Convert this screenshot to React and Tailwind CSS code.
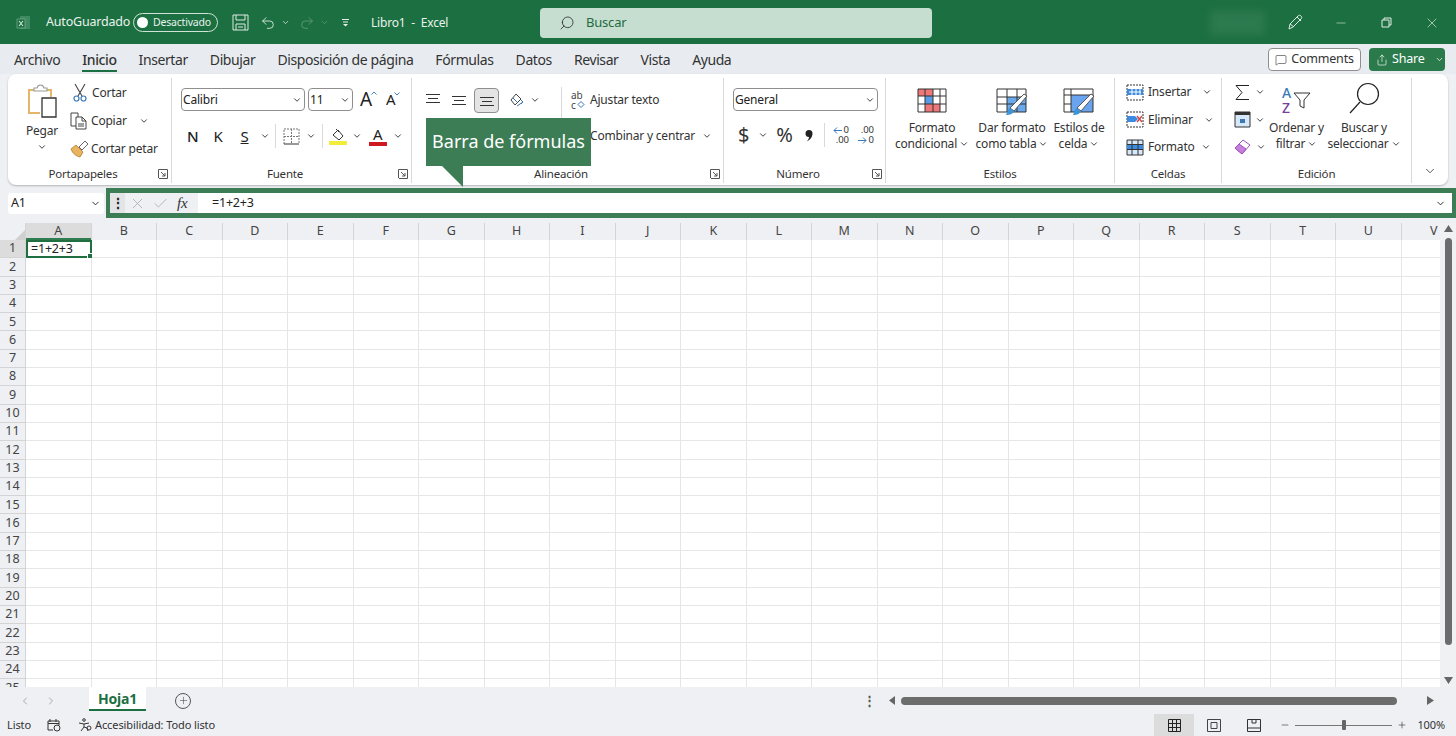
import { ChevronDown, ChevronLeft, ChevronRight, Undo2, Redo2, Search, X, Check, Minus, Plus, MessageSquare, Share } from 'lucide-react'

const tabs = ['Archivo', 'Inicio', 'Insertar', 'Dibujar', 'Disposición de página', 'Fórmulas', 'Datos', 'Revisar', 'Vista', 'Ayuda']
const columns = 'ABCDEFGHIJKLMNOPQRSTUV'.split('')
const rows = Array.from({ length: 25 }, (_, i) => i + 1)

const Chev = ({ className = '' }) => <ChevronDown size={10} strokeWidth={2.4} className={`text-[#444] shrink-0 ${className}`} />

const Launcher = () => (
  <svg width="10" height="10" viewBox="0 0 10 10" fill="none" stroke="#555" strokeWidth="1" className="shrink-0">
    <path d="M.5 9V.5H9.5V9.5H1" />
    <path d="M3 3l4 4M7 4v3H4" />
  </svg>
)

const PasteIcon = () => (
  <svg width="34" height="36" viewBox="0 0 34 36" fill="none">
    <path d="M15 30H4V7h22v7" stroke="#e5b66a" strokeWidth="2" />
    <path d="M9 8V5h3c1-4 6-4 7 0h3v3z" fill="#fff" stroke="#9a9a9a" strokeWidth="1.1" />
    <path d="M17 15h14v19H17z" fill="#fff" stroke="#333" strokeWidth="1.3" />
  </svg>
)

const ScissorsIcon = () => (
  <svg width="14" height="19" viewBox="0 0 14 19" fill="none">
    <path d="M2 1l7 12M12 1L5 13" stroke="#444" strokeWidth="1.1" />
    <circle cx="3.500" cy="15.500" r="2.500" stroke="#3b78b8" strokeWidth="1.2" />
    <circle cx="10.500" cy="15.500" r="2.500" stroke="#3b78b8" strokeWidth="1.2" />
  </svg>
)

const CopyIcon = () => (
  <svg width="18" height="18" viewBox="0 0 18 18" fill="none" stroke="#444" strokeWidth="1">
    <path d="M1 1h7v13H1z" />
    <path d="M6 5h6l4 4v8H6z" fill="#fff" />
    <path d="M12 5v4h4M8 12h6M8 14h6" />
  </svg>
)

const BrushIcon = () => (
  <svg width="19" height="18" viewBox="0 0 19 18" fill="none">
    <path d="M1 9l5-4 7 7-3 5c-4-1-7-3-9-8z" fill="#eab35f" stroke="#a8782f" strokeWidth=".8" />
    <path d="M9 7l6-6 3 3-6 6z" fill="#fff" stroke="#555" strokeWidth=".9" />
  </svg>
)

const Lines = ({ y }) => (
  <svg width="16" height="14" viewBox="0 0 16 14" stroke="#333" strokeWidth="1.1">
    <path d={y} />
  </svg>
)

const CondFormatIcon = () => (
  <svg width="30" height="25" viewBox="0 0 30 25" fill="none">
    <path d="M1 1h15v7H1zM8 16h15v8H8z" fill="#ee7777" />
    <path d="M8 8h8v8H8z" fill="#5a9be6" />
    <path d="M1 1h28v23H1zM1 8h28M1 16h28M8 1v23M16 1v23M23 1v23" stroke="#333" strokeWidth="1" />
  </svg>
)

const TableFormatIcon = () => (
  <svg width="32" height="28" viewBox="0 0 32 28" fill="none">
    <path d="M11 9h19v15H11z" fill="#6aa9ec" />
    <path d="M1 1h29v23H1zM1 9h29M1 16h29M11 1v23M21 1v23" stroke="#333" strokeWidth="1" />
    <path d="M14 20L28 6l3 2-13 15z" fill="#fff" stroke="#555" />
    <path d="M10 27l3-7 5 3c-1 3-4 4-8 4z" fill="#3c95d8" />
  </svg>
)

const CellStyleIcon = () => (
  <svg width="32" height="28" viewBox="0 0 32 28" fill="none">
    <path d="M8 7h22v17H8z" fill="#6aa3ee" />
    <path d="M1 1h29v23H1zM1 7h29M8 1v23M1 16h7" stroke="#333" strokeWidth="1" />
    <path d="M14 20L28 6l3 2-13 15z" fill="#fff" stroke="#555" />
    <path d="M10 27l3-7 5 3c-1 3-4 4-8 4z" fill="#3c95d8" />
  </svg>
)

const CellIcon = ({ kind }) => (
  <svg width="18" height="17" viewBox="0 0 18 17" fill="none">
    <path d="M1 1h16v15H1z" fill={kind === 'format' ? '#d7e8f8' : '#fff'} stroke="#333" strokeDasharray={kind === 'format' ? undefined : '2 1'} />
    <path d={kind === 'delete' ? 'M1 5h8l3 3-3 3H1z' : 'M1 5h16v6H1z'} fill="#3d8be0" />
    {kind === 'delete' && <path d="M11 5l5 6M16 5l-5 6" stroke="#d04545" strokeWidth="1.4" />}
    {kind === 'format' && <path d="M1 5.500h16M1 10.500h16M6 1v15M12 1v15" stroke="#333" />}
    {kind === 'insert' && <path d="M3 8h12M6 5v6M10 5v6M14 5v6" stroke="#fff" />}
  </svg>
)

const Group = ({ label, launcher, className, children }) => (
  <div className={`flex flex-col h-full shrink-0 border-r border-[#d9d9d9] ${className}`}>
    <div className="flex-1 min-h-0">{children}</div>
    <div className="h-[18px] flex items-center text-[11.500px] text-[#333]">
      <span className="flex-1 text-center">{label}</span>
      {launcher && <Launcher />}
    </div>
  </div>
)

const LargeButton = ({ icon, lines, className = '' }) => (
  <div className={`flex flex-col items-center shrink-0 ${className}`}>
    <div className="h-[40px] w-full flex items-start justify-center pt-[8px]">{icon}</div>
    <div className="text-[12px] leading-[16px] text-center text-[#333] whitespace-nowrap">
      <div>{lines[0]}</div>
      <div className="flex items-center justify-center gap-[2px]">{lines[1]}<Chev /></div>
    </div>
  </div>
)

const Select = ({ value, className }) => (
  <div className={`h-[23px] bg-white border border-[#8f8f8f] rounded-[4px] flex items-center justify-between pl-[1px] pr-[2px] text-[12px] text-[#222] ${className}`}>
    <span>{value}</span>
    <Chev />
  </div>
)

export default function App() {
  return (
    <div className="w-[1456px] h-[736px] relative overflow-hidden flex flex-col bg-[#eef0f3] text-[#222] tracking-[-0.2px] font-['Noto_Sans','Open_Sans',sans-serif]">
      {/* title bar */}
      <div className="h-[44px] shrink-0 bg-[#1c6f41] flex items-center text-white text-[12.500px] pt-[1px]">
        <svg width="16" height="16" viewBox="0 0 16 16" className="ml-[15px]">
          <path d="M5 1h10v13H5z" fill="#3f8a60" />
          <path d="M2 4h8v9H2z" fill="#1c6f41" stroke="#8fbda3" strokeWidth=".6" />
          <path d="M4 6l4 5M8 6l-4 5" stroke="#d6e6dc" strokeWidth="1.1" />
        </svg>
        <span className="ml-[15px] w-[81px] whitespace-nowrap text-[#e9f2ec]">AutoGuardado</span>
        <div className="ml-[6px] w-[85px] h-[19px] rounded-full border border-[#cfe3d6] flex items-center pl-[3px] gap-[5px]">
          <span className="w-[11px] h-[11px] rounded-full bg-white" />
          <span className="text-[10.500px] text-[#e9f2ec]">Desactivado</span>
        </div>
        <svg width="17" height="17" viewBox="0 0 17 17" fill="none" stroke="#dcebe2" className="ml-[14px]">
          <path d="M1 1h15v15H1zM4 1v5h9V1M4 16v-6h9v6M6 13h5" />
        </svg>
        <Undo2 size={16} strokeWidth={1.3} className="ml-[11px] text-[#e3efe8]" />
        <ChevronDown size={9} strokeWidth={2} className="ml-[5px] text-[#e3efe8]" />
        <Redo2 size={16} strokeWidth={1.3} className="ml-[9px] text-[#5f9c7a]" />
        <ChevronDown size={9} strokeWidth={2} className="ml-[5px] text-[#5f9c7a]" />
        <svg width="9" height="9" viewBox="0 0 9 9" stroke="#e3efe8" className="ml-[12px]">
          <path d="M1 1.500h7M2 4h5" />
          <path d="M2 6h5L4.500 8.500z" fill="#e3efe8" stroke="none" />
        </svg>
        <span className="ml-[21px] w-[80px] text-[#e9f2ec] text-[12px] whitespace-pre">Libro1  -  Excel</span>
        <div className="ml-[89px] w-[392px] h-[30px] rounded-[4px] bg-[#c5decf] flex items-center pl-[19px] text-[#1f6b41]">
          <Search size={16} strokeWidth={1.3} className="text-[#333] -scale-x-100" />
          <span className="ml-[11px] text-[13px]">Buscar</span>
        </div>
        <div className="ml-[278px] w-[55px] h-[24px] bg-[#2c7a4f] blur-[4px]" />
        <svg width="17" height="17" viewBox="0 0 17 17" fill="none" stroke="#dcebe2" className="ml-[22px]">
          <path d="M2 15l1-5 8-8c1-1 2-1 3 0s1 2 0 3l-8 8z" />
          <path d="M10 3l4 4M3 10l4 3" />
        </svg>
        <Minus size={14} strokeWidth={1} className="ml-[30px] text-[#e3efe8]" />
        <svg width="11" height="11" viewBox="0 0 11 11" fill="none" stroke="#e3efe8" className="ml-[33px]">
          <path d="M1 3h7v7H1zM3 3V1h7v7H8" />
        </svg>
        <X size={16} strokeWidth={1} className="ml-[32px] text-[#e3efe8]" />
      </div>

      {/* tabs */}
      <div className="h-[30px] shrink-0 bg-[#e8ecf0] flex items-center text-[14px] text-[#333] pl-[14px] tracking-[-0.4px] pt-[1px]">
        <div className="flex items-center gap-[22px] flex-1">
          {tabs.map((tab) => (
            <span key={tab} className={`relative whitespace-nowrap ${tab === 'Inicio' ? 'font-medium' : ''}`}>
              {tab}
              {tab === 'Inicio' && <span className="absolute left-0 right-0 -bottom-[2px] h-[2px] bg-[#1c6f41]" />}
            </span>
          ))}
        </div>
        <div className="w-[93px] h-[23px] bg-white border border-[#8f8f8f] rounded-[4px] flex items-center justify-center gap-[4px] text-[12.500px] tracking-[-0.2px]">
          <MessageSquare size={12} strokeWidth={1.2} />
          Comments
        </div>
        <div className="ml-[8px] mr-[11px] w-[76px] h-[23px] bg-[#2a7a4b] rounded-[4px] flex items-center pl-[7px] gap-[4px] text-[12.500px] text-white tracking-[-0.2px]">
          <Share size={12} strokeWidth={1.3} />
          Share
          <ChevronDown size={9} strokeWidth={2} className="ml-[6px]" />
        </div>
      </div>

      {/* ribbon */}
      <div className="h-[111px] shrink-0 mx-[8px] bg-white rounded-[8px] shadow-[0_1px_2px_rgba(0,0,0,0.25)] flex pt-[4px] pb-[2px]">
        <Group label="Portapapeles" launcher className="w-[164px] pr-[3px]">
          <div className="flex pl-[17px]">
            <div className="flex flex-col items-center w-[34px] pt-[5px]">
              <PasteIcon />
              <span className="text-[12px] mt-[3px] text-[#333]">Pegar</span>
              <Chev className="mt-[2px]" />
            </div>
            <div className="ml-[11px] pt-[5px] flex flex-col gap-[9px] text-[12px] text-[#333]">
              <div className="h-[19px] flex items-center gap-[5px] pl-[3px]"><ScissorsIcon />Cortar</div>
              <div className="h-[19px] flex items-center gap-[3px]"><CopyIcon />Copiar<Chev className="ml-[9px]" /></div>
              <div className="h-[19px] flex items-center gap-[2px] whitespace-nowrap"><BrushIcon />Cortar petar</div>
            </div>
          </div>
        </Group>

        <Group label="Fuente" launcher className="w-[240px] pr-[3px]">
          <div className="pl-[9px] pt-[10px]">
            <div className="flex items-center gap-[3px]">
              <Select value="Calibri" className="w-[124px]" />
              <Select value="11" className="w-[45px]" />
              <span className="ml-[4px] text-[19px] leading-none relative">
                A
                <svg width="6" height="4" viewBox="0 0 6 4" fill="none" stroke="#4080c0" className="absolute top-[1px] -right-[5px]"><path d="M.5 3.500L3 1l2.500 2.500" /></svg>
              </span>
              <span className="ml-[11px] text-[15px] leading-none relative">
                A
                <svg width="6" height="4" viewBox="0 0 6 4" fill="none" stroke="#4080c0" className="absolute top-[0px] -right-[5px]"><path d="M.5.500L3 3 5.500.500" /></svg>
              </span>
            </div>
            <div className="flex items-center mt-[13px] text-[#222] h-[24px]">
              <span className="ml-[6px] text-[15px] font-medium">N</span>
              <span className="ml-[15px] text-[15px]">K</span>
              <span className="ml-[18px] text-[15px] underline">S</span>
              <Chev className="ml-[11px]" />
              <span className="ml-[5px] w-px h-[24px] bg-[#d9d9d9]" />
              <svg width="17" height="17" viewBox="0 0 17 17" fill="none" stroke="#777" className="ml-[7px]"><path strokeDasharray="2 1" d="M1 16V1h15v15M8.500 1v15M1 8.500h15" /><path d="M1 16h15" stroke="#333" /></svg>
              <Chev className="ml-[6px]" />
              <span className="ml-[6px] w-px h-[24px] bg-[#d9d9d9]" />
              <div className="ml-[6px] flex flex-col items-center w-[18px]">
                <svg width="15" height="13" viewBox="0 0 15 13" fill="none" stroke="#333"><path d="M3 7l5-5 5 6-4 4z" /><path d="M6 1l3 3" /></svg>
                <span className="w-[18px] h-[4px] bg-[#f3ec3a]" />
              </div>
              <Chev className="ml-[5px]" />
              <div className="ml-[7px] flex flex-col items-center w-[18px] text-[15px] leading-[15px]">
                A
                <span className="w-[18px] h-[4px] bg-[#d01820]" />
              </div>
              <Chev className="ml-[6px]" />
            </div>
          </div>
        </Group>

        <Group label="Alineación" launcher className="w-[312px] pr-[3px]">
          <div className="flex pl-[13px] pt-[9px]">
            <div className="flex items-center gap-[10px] h-[26px]">
              <Lines y="M1 1.500h14M3 5.500h10M1 9.500h14" />
              <Lines y="M1 3.500h14M3 7.500h10M1 11.500h14" />
              <div className="w-[25px] h-[25px] -ml-[3px] bg-[#e4e4e4] border border-[#8f8f8f] rounded-[4px] flex items-center justify-center">
                <Lines y="M1 4.500h14M3 8.500h10M1 12.500h14" />
              </div>
              <div className="flex items-center gap-[4px]">
                <svg width="17" height="17" viewBox="0 0 17 17" fill="none" stroke="#444"><path d="M2 8l5-6 5 5-6 6z" /><path d="M4 6l4 4M8 14l6-4M12 8l2 2-2 2" stroke="#3b78b8" /></svg>
                <Chev />
              </div>
            </div>
            <span className="ml-[21px] w-px h-[34px] bg-[#d9d9d9]" />
            <div className="ml-[9px] flex flex-col text-[12px] text-[#333]">
              <div className="h-[26px] flex items-center gap-[3px] whitespace-nowrap">
                <div className="w-[16px] text-[10px] leading-[10px] text-[#444]">
                  <div>ab</div>
                  <div className="flex items-center">
                    c
                    <svg width="8" height="8" viewBox="0 0 8 8" fill="none" stroke="#3b78b8" className="ml-[1px]"><path d="M4 .500l3 3-3 3-3-3z" /></svg>
                  </div>
                </div>
                Ajustar texto
              </div>
              <div className="h-[26px] mt-[10px] flex items-center whitespace-nowrap pl-[19px]">Combinar y centrar<Chev className="ml-[7px]" /></div>
            </div>
          </div>
        </Group>

        <Group label="Número" launcher className="w-[162px] pr-[3px]">
          <div className="pl-[9px] pt-[10px]">
            <Select value="General" className="w-[145px]" />
            <div className="flex items-center mt-[12px] h-[24px] text-[#333]">
              <span className="ml-[5px] text-[20px] leading-none">$</span>
              <Chev className="ml-[9px]" />
              <span className="ml-[8px] text-[20px] leading-none">%</span>
              <svg width="8" height="13" viewBox="0 0 8 13" className="ml-[12px]"><path d="M4 1a3.500 3.500 0 0 1 3.500 3.500C7.500 8 5 11 2 12.500 3.500 10.500 4 9 4 8a3.500 3.500 0 0 1 0-7z" fill="#222" /></svg>
              <span className="ml-[11px] w-px h-[24px] bg-[#d9d9d9]" />
              <div className="ml-[6px] w-[18px] text-[9.500px] leading-[10px] flex flex-col items-end">
                <div className="flex items-center">
                  <svg width="9" height="7" viewBox="0 0 9 7" fill="none" stroke="#3b78b8"><path d="M9 3.500H1M4 .500l-3 3 3 3" /></svg>
                  <span className="ml-[1px]">0</span>
                </div>
                <span>.00</span>
              </div>
              <div className="ml-[7px] w-[18px] text-[9.500px] leading-[10px] flex flex-col items-end">
                <span>.00</span>
                <div className="flex items-center">
                  <svg width="9" height="7" viewBox="0 0 9 7" fill="none" stroke="#3b78b8"><path d="M0 3.500h8M5 .500l3 3-3 3" /></svg>
                  <span className="ml-[1px]">0</span>
                </div>
              </div>
            </div>
          </div>
        </Group>

        <Group label="Estilos" className="w-[229px]">
          <div className="flex pt-[2px]">
            <LargeButton icon={<CondFormatIcon />} lines={['Formato', 'condicional']} className="w-[92px]" />
            <LargeButton icon={<TableFormatIcon />} lines={['Dar formato', 'como tabla']} className="w-[68px]" />
            <LargeButton icon={<CellStyleIcon />} lines={['Estilos de', 'celda']} className="w-[52px] ml-[7px]" />
          </div>
        </Group>

        <Group label="Celdas" className="w-[107px]">
          <div className="flex flex-col pl-[11px] pt-[5px] gap-[9.500px] text-[12px] text-[#333]">
            <div className="h-[18px] flex items-center gap-[4px]"><CellIcon kind="insert" />Insertar<Chev className="ml-[7px]" /></div>
            <div className="h-[18px] flex items-center gap-[4px]"><CellIcon kind="delete" />Eliminar<Chev className="ml-[7px]" /></div>
            <div className="h-[18px] flex items-center gap-[4px]"><CellIcon kind="format" />Formato<Chev className="ml-[2px]" /></div>
          </div>
        </Group>

        <Group label="Edición" className="w-[190px]">
          <div className="flex pl-[12px] pt-[2px]">
            <div className="flex flex-col gap-[9.500px] w-[35px] shrink-0 pt-[3px]">
              <div className="h-[18px] flex items-center gap-[5px]">
                <svg width="16" height="17" viewBox="0 0 16 17" fill="none" stroke="#222"><path d="M15 1.500H2l6 7-6 7h13" /></svg>
                <Chev />
              </div>
              <div className="h-[18px] flex items-center gap-[4px]">
                <svg width="17" height="17" viewBox="0 0 17 17" fill="none"><path d="M1 1h15v15H1z" fill="#d7e8f8" stroke="#333" /><path d="M1 1h15v3H1z" fill="#333" /><path d="M6 8h5v4H6z" fill="#3b78b8" /></svg>
                <Chev />
              </div>
              <div className="h-[18px] flex items-center gap-[3px]">
                <svg width="19" height="18" viewBox="0 0 19 18" fill="none"><path d="M1 10l8-8 7 5-8 9z" fill="#fff" stroke="#a050c0" /><path d="M1 10l4-4 7 5-4 5z" fill="#c77fdc" stroke="#a050c0" /></svg>
                <Chev />
              </div>
            </div>
            <div className="flex flex-col items-center w-[55px] shrink-0">
              <div className="h-[40px] flex items-center">
                <div className="flex flex-col text-[14px] leading-[15px] font-medium">
                  <span className="text-[#3b78b8]">A</span>
                  <span className="text-[#7a3f9a]">Z</span>
                </div>
                <svg width="18" height="18" viewBox="0 0 18 18" fill="none" stroke="#333" className="ml-[2px]"><path d="M1 2h16l-6 7v8l-4-2V9z" /></svg>
              </div>
              <div className="text-[12px] leading-[16px] text-center text-[#333] whitespace-nowrap">
                <div>Ordenar y</div>
                <div className="flex items-center justify-center gap-[2px]">filtrar<Chev /></div>
              </div>
            </div>
            <div className="flex flex-col items-center w-[72px] shrink-0 ml-[4px]">
              <div className="h-[40px] flex items-start">
                <svg width="32" height="32" viewBox="0 0 32 32" fill="none" stroke="#222" strokeWidth="1.2" className="mt-[2px]"><circle cx="20" cy="12" r="10.500" /><path d="M12 20L2 31" /></svg>
              </div>
              <div className="text-[12px] leading-[16px] text-center text-[#333] whitespace-nowrap">
                <div>Buscar y</div>
                <div className="flex items-center justify-center gap-[2px]">seleccionar<Chev /></div>
              </div>
            </div>
          </div>
        </Group>

        <div className="flex-1 flex items-end justify-center pb-[5px]">
          <ChevronDown size={14} strokeWidth={1.4} className="text-[#333]" />
        </div>
      </div>

      {/* name box and formula bar */}
      <div className="h-[34px] shrink-0 flex items-center mt-[1px]">
        <div className="ml-[8px] w-[96px] h-[21px] bg-white rounded-[3px] flex items-center justify-between pl-[3px] pr-[3px] text-[12.500px]">
          A1
          <ChevronDown size={11} strokeWidth={2} />
        </div>
        <div className="ml-[2px] flex-1 h-[30px] border-[5px] border-r-[4px] border-[#3c7d55] flex items-center bg-[#eef0f3] min-w-0">
          <div className="w-[15px] h-full bg-[#e2e4e6] flex items-center justify-center text-[14px] font-bold leading-none -translate-x-[1px]">⋮</div>
          <X size={17} strokeWidth={1.1} className="ml-[3px] text-[#a8a8a8]" />
          <Check size={17} strokeWidth={1.1} className="ml-[6px] text-[#a8a8a8]" />
          <span className="ml-[8px] w-[14px] text-[15px] italic font-['Liberation_Serif',serif] text-[#333]">fx</span>
          <div className="ml-[7px] flex-1 h-full bg-white flex items-center justify-between pl-[14px] pr-[6px] text-[12.500px]">
            =1+2+3
            <ChevronDown size={11} strokeWidth={2} />
          </div>
        </div>
      </div>

      {/* sheet */}
      <div className="flex-1 min-h-0 flex mt-[3px]">
        <div className="flex-1 min-w-0 overflow-hidden bg-white text-[12.500px] leading-none text-[#444] tracking-normal">
          <div className="flex h-[17px] bg-[#eef0f3]">
            <div className="w-[26px] shrink-0 border-r border-[#d4d4d4] flex items-end justify-end">
              <svg width="10" height="10" viewBox="0 0 10 10"><path d="M10 0v10H0z" fill="#d0d0d0" /></svg>
            </div>
            {columns.map((col) => (
              <div key={col} className={`w-[65.500px] shrink-0 border-r border-[#d4d4d4] flex items-center justify-center ${col === 'A' ? 'bg-[#dcdcdc] shadow-[inset_0_-2px_0_#2f7d50]' : ''}`}>{col}</div>
            ))}
          </div>
          {rows.map((row) => (
            <div key={row} className="flex h-[18.300px]">
              <div className={`w-[26px] shrink-0 border-r border-b border-[#d4d4d4] flex items-center justify-center ${row === 1 ? 'bg-[#dcdcdc]' : 'bg-[#eef0f3]'}`}>{row}</div>
              {columns.map((col) => {
                const active = row === 1 && col === 'A'
                return (
                  <div key={col} className={`w-[65.500px] shrink-0 flex items-center relative ${active ? 'border-2 border-[#1f6f41] pl-[3px] text-[#222] tracking-[-0.2px]' : 'border-r border-b border-[#e6e6e6]'}`}>
                    {active ? '=1+2+3' : ''}
                    {active && <span className="absolute -right-[3px] -bottom-[3px] w-[4px] h-[4px] bg-[#1f6f41] border border-white box-content" />}
                  </div>
                )
              })}
            </div>
          ))}
        </div>
        <div className="w-[16px] shrink-0 flex flex-col items-center py-[2px] bg-[#f0f1f2]">
          <svg width="9" height="7" viewBox="0 0 9 7"><path d="M4.500 0L9 7H0z" fill="#666" /></svg>
          <div className="w-[7px] h-[407px] mt-[6px] rounded-full bg-[#6c6c6c]" />
          <svg width="9" height="7" viewBox="0 0 9 7" className="mt-auto mb-[1px]"><path d="M4.500 7L9 0H0z" fill="#666" /></svg>
        </div>
      </div>

      {/* sheet tabs */}
      <div className="h-[27px] shrink-0 bg-[#eef0f3] flex items-center">
        <ChevronLeft size={12} className="ml-[19px] text-[#a8a8a8]" />
        <ChevronRight size={12} className="ml-[14px] text-[#a8a8a8]" />
        <div className="ml-[32px] w-[57px] h-[24px] -mt-[3px] bg-white border-b-2 border-[#1c6f41] flex items-center justify-center text-[14px] font-bold text-[#1c6f41]">Hoja1</div>
        <div className="ml-[29px] w-[16px] h-[16px] rounded-full border border-[#555] flex items-center justify-center">
          <Plus size={11} strokeWidth={1.2} className="text-[#444]" />
        </div>
        <div className="ml-auto flex items-center">
          <span className="text-[13px] font-bold leading-none text-[#555]">⋮</span>
          <svg width="6" height="9" viewBox="0 0 6 9" className="ml-[13px]"><path d="M0 4.500L6 0v9z" fill="#666" /></svg>
          <div className="ml-[6px] w-[496px] h-[8px] rounded-full bg-[#6c6c6c]" />
          <svg width="7" height="9" viewBox="0 0 7 9" className="ml-[30px] mr-[22px]"><path d="M7 4.500L0 0v9z" fill="#666" /></svg>
        </div>
      </div>

      {/* status bar */}
      <div className="h-[22px] shrink-0 bg-[#eef0f3] flex items-center text-[11px] text-[#333] tracking-[-0.1px]">
        <span className="ml-[7px]">Listo</span>
        <svg width="14" height="14" viewBox="0 0 14 14" fill="none" stroke="#333" className="ml-[16px]">
          <path d="M1 3h11v4M1 3v9h5M1 5.500h11M3 1v3M9 1v3" /><circle cx="10" cy="10" r="3" />
        </svg>
        <svg width="14" height="14" viewBox="0 0 14 14" fill="none" stroke="#333" className="ml-[17px]">
          <circle cx="6" cy="2" r="1.300" /><path d="M1 5l5 1 5-1M6 6v3l-3 4M6 9l3 1 1 3" /><circle cx="11" cy="10" r="2" />
        </svg>
        <span className="ml-[3px]">Accesibilidad: Todo listo</span>
        <div className="ml-auto h-full w-[40px] bg-[#dcdcdc] flex items-center justify-center">
          <svg width="13" height="13" viewBox="0 0 13 13" fill="none" stroke="#222"><path d="M.5.500h12v12H.5zM.5 4.500h12M.5 8.500h12M4.500.500v12M8.500.500v12" /></svg>
        </div>
        <svg width="14" height="13" viewBox="0 0 14 13" fill="none" stroke="#444" className="ml-[13px]"><path d="M.5.500h13v12H.5zM4 3.500h6v6H4z" /></svg>
        <svg width="14" height="13" viewBox="0 0 14 13" fill="none" stroke="#333" className="ml-[26px]"><path d="M.5.500h13v12H.5zM.5 9h13M5 .500V4h4V.500" /></svg>
        <Minus size={10} strokeWidth={1.5} className="ml-[19px]" />
        <div className="ml-[5px] w-[97px] h-px bg-[#777] flex items-center justify-center">
          <span className="w-[4px] h-[10px] bg-[#666] rounded-[1px]" />
        </div>
        <Plus size={10} strokeWidth={1.5} className="ml-[5px]" />
        <span className="ml-[10px] mr-[11px] text-[#333]">100%</span>
      </div>

      {/* callout over the ribbon */}
      <div className="absolute left-[426px] top-[118px] w-[165px] h-[48px] pb-[2px] bg-[#3c7d55] flex items-center justify-center text-[18px] tracking-normal text-white whitespace-nowrap">
        Barra de fórmulas
        <svg width="22" height="22" viewBox="0 0 22 22" className="absolute left-[15px] top-[47px]">
          <path d="M0 0h22v22z" fill="#3c7d55" />
        </svg>
      </div>
    </div>
  )
}
